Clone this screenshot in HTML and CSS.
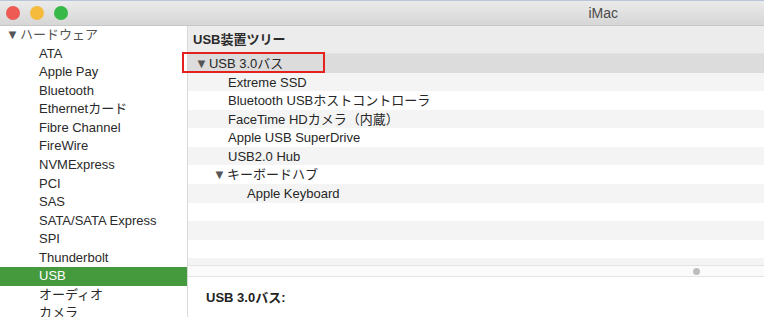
FILE: index.html
```html
<!DOCTYPE html>
<html lang="ja">
<head>
<meta charset="utf-8">
<title>iMac</title>
<link rel="stylesheet" href="styles.css">
</head>
<body>
<div class="window">
  <div class="titlebar">
    <div class="lights">
      <span class="light red"></span>
      <span class="light yellow"></span>
      <span class="light green"></span>
    </div>
    <div class="title">iMac</div>
  </div>
  <div class="main">
    <div class="sidebar">
      <div class="srow group"><span class="tri">▼</span>ハードウェア</div>
      <div class="srow item">ATA</div>
      <div class="srow item">Apple Pay</div>
      <div class="srow item">Bluetooth</div>
      <div class="srow item">Ethernetカード</div>
      <div class="srow item">Fibre Channel</div>
      <div class="srow item">FireWire</div>
      <div class="srow item">NVMExpress</div>
      <div class="srow item">PCI</div>
      <div class="srow item">SAS</div>
      <div class="srow item">SATA/SATA Express</div>
      <div class="srow item">SPI</div>
      <div class="srow item">Thunderbolt</div>
      <div class="srow item selected">USB</div>
      <div class="srow item">オーディオ</div>
      <div class="srow item">カメラ</div>
    </div>
    <div class="content">
      <div class="tree-header">USB装置ツリー</div>
      <div class="tree">
        <div class="trow sel lvl0"><span class="tri">▼</span>USB 3.0バス<span class="mark"></span></div>
        <div class="trow alt lvl1">Extreme SSD</div>
        <div class="trow lvl1">Bluetooth USBホストコントローラ</div>
        <div class="trow alt lvl1">FaceTime HDカメラ（内蔵）</div>
        <div class="trow lvl1">Apple USB SuperDrive</div>
        <div class="trow alt lvl1">USB2.0 Hub</div>
        <div class="trow lvl1b"><span class="tri">▼</span>キーボードハブ</div>
        <div class="trow alt lvl2">Apple Keyboard</div>
        <div class="trow"></div>
        <div class="trow alt"></div>
        <div class="trow"></div>
        <div class="trow alt"></div>
      </div>
      <div class="splitter"><span class="knob"></span></div>
      <div class="detail">USB 3.0バス:</div>
    </div>
  </div>
</div>
</body>
</html>
```

FILE: styles.css
```css
* { box-sizing: border-box; }
html, body {
  margin: 0;
  padding: 0;
  width: 764px;
  height: 317px;
  overflow: hidden;
  background: #ffffff;
  font-family: "Liberation Sans", "Noto Sans CJK JP", sans-serif;
  font-size: 13px;
  color: #262626;
}
.window {
  display: flex;
  flex-direction: column;
  width: 764px;
  height: 317px;
}
.titlebar {
  height: 26px;
  flex: none;
  display: flex;
  align-items: center;
  border-top: 1px solid #b9c6d8;
  border-bottom: 1px solid #c6c6c6;
  background: linear-gradient(#ebebeb, #d6d6d6);
  padding-right: 146px;
}
.lights {
  display: flex;
  gap: 10px;
  padding-left: 6px;
}
.light {
  width: 14px;
  height: 14px;
  border-radius: 50%;
  display: block;
}
.red { background: #ee5b55; }
.yellow { background: #f4bb3c; }
.green { background: #38b849; }
.title {
  margin-left: auto;
  color: #4a4a4a;
  font-size: 14px;
}
.main {
  display: flex;
  flex: 1;
  min-height: 0;
}
.sidebar {
  width: 188px;
  flex: none;
  border-right: 1px solid #d9d9d9;
  background: #ffffff;
  overflow: hidden;
}
.srow {
  height: 18.57px;
  line-height: 18.57px;
  white-space: nowrap;
  color: #2a2a2a;
}
.srow.group { padding-left: 6px; color: #555; }
.srow.group .tri { font-size: 13px; margin-right: 1px; color: #555; }
.srow.item { padding-left: 39px; }
.srow.selected { background: #469a3e; color: #ffffff; }
.content {
  flex: 1;
  display: flex;
  flex-direction: column;
  min-width: 0;
}
.tree-header {
  height: 28px;
  flex: none;
  background: #ececec;
  font-weight: bold;
  padding-left: 5px;
  padding-top: 2px;
  line-height: 24px;
  border-bottom: 1px solid #e2e2e2;
  color: #2a2a2a;
}
.tree {
  height: 211px;
  flex: none;
  clip-path: inset(-3px 0 0 -10px);
  background: #ffffff;
}
.trow {
  height: 18.57px;
  line-height: 18.57px;
  padding-top: 1px;
  white-space: nowrap;
  position: relative;
}
.trow.alt { background: #f4f4f4; }
.trow.sel { background: #dcdcdc; }
.trow .tri { font-size: 13px; margin-right: 1px; color: #555; }
.lvl0 { padding-left: 7px; }
.lvl1 { padding-left: 40px; }
.lvl1b { padding-left: 25px; }
.lvl2 { padding-left: 59px; }
.mark {
  position: absolute;
  left: -6px;
  top: -2px;
  width: 143px;
  height: 21px;
  border: 2px solid #e3211d;
}
.splitter {
  height: 12px;
  flex: none;
  border-top: 1px solid #e3e3e3;
  border-bottom: 1px solid #e3e3e3;
  background: #fbfbfb;
  display: flex;
  align-items: center;
  padding-left: 505px;
}
.knob {
  width: 7px;
  height: 7px;
  border-radius: 50%;
  background: #bdbdbd;
  display: block;
}
.detail {
  flex: 1;
  background: #ffffff;
  font-weight: bold;
  padding-left: 18px;
  padding-top: 10px;
  color: #222;
}
```
